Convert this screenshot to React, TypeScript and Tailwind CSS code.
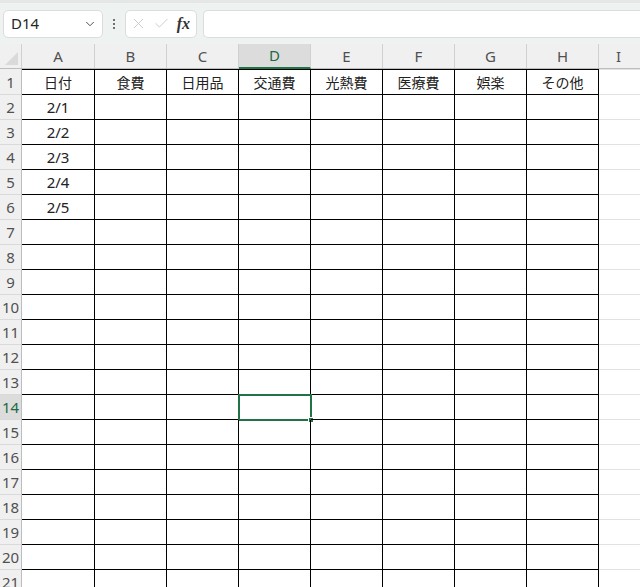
import { ChevronDown, X, Check } from "lucide-react";

const columns = ["A", "B", "C", "D", "E", "F", "G", "H"];
const headers = ["日付", "食費", "日用品", "交通費", "光熱費", "医療費", "娯楽", "その他"];
const dates = ["2/1", "2/2", "2/3", "2/4", "2/5"];
const ROWS = 21;
const SELECTED_ROW = 14;
const SELECTED_COL = 3;

function FormulaBar() {
  return (
    <div className="h-[44px] bg-[#eef2f1] border-t-[3px] border-[#e4e7e6] flex items-center pl-[3px] gap-0">
      <div className="w-[100px] h-[28px] bg-white border border-[#dcdcdc] rounded-[5px] flex items-center justify-between pl-[7px] pr-[5px] text-[15px] text-[#262626]">
        <span>D14</span>
        <ChevronDown size={14} strokeWidth={1.6} className="text-[#444]" />
      </div>
      <div className="w-[22px] flex flex-col items-center gap-[2px]">
        <span className="w-[2px] h-[2px] bg-[#444] rounded-full" />
        <span className="w-[2px] h-[2px] bg-[#444] rounded-full" />
        <span className="w-[2px] h-[2px] bg-[#444] rounded-full" />
      </div>
      <div className="w-[72px] h-[28px] bg-white border border-[#dcdcdc] rounded-[5px] flex items-center justify-between px-[4px]">
        <X size={17} strokeWidth={1.2} className="text-[#c4c4c4]" />
        <Check size={17} strokeWidth={1.2} className="text-[#c4c4c4]" />
        <span className="font-['Liberation_Serif'] italic font-bold text-[16px] text-[#333] leading-none pr-[2px]">
          fx
        </span>
      </div>
      <div className="flex-1 h-[28px] bg-white border border-[#dcdcdc] border-r-0 rounded-l-[5px] ml-[6px]" />
    </div>
  );
}

// column A is one pixel wider than the rest
const colWidth = (i: number) => (i === 0 ? "w-[73px]" : "w-[72px]");

function ColumnHeader() {
  return (
    <div className="flex h-[25px] bg-[#f0f0f0] border-b border-[#bdbdbd] text-[15px] text-[#505050]">
      <div className="w-[22px] shrink-0 border-r border-[#d0d0d0] relative overflow-hidden">
        <div className="absolute right-[3px] bottom-[3px] w-0 h-0 border-l-[13px] border-l-transparent border-b-[13px] border-b-[#dadada]" />
      </div>
      {columns.map((c, i) => (
        <div
          key={c}
          className={`${colWidth(i)} shrink-0 flex items-center justify-center border-r border-r-[#d0d0d0] ${
            i === SELECTED_COL ? "bg-[#dcdcdc] text-[#1e6b42] border-b-2 border-b-[#217346] -mb-px" : ""
          }`}
        >
          {c}
        </div>
      ))}
      <div className="flex-1 flex items-center justify-center pr-[2px]">I</div>
    </div>
  );
}

function Row({ r }: { r: number }) {
  const first = r === 1;
  const selected = r === SELECTED_ROW;
  const h = first ? "h-[26px] border-t border-t-black" : "h-[25px]";
  return (
    <div className="flex">
      <div
        className={`w-[22px] shrink-0 flex items-center justify-center border-r border-[#bdbdbd] text-[15px] ${
          first ? "h-[26px] pt-px" : "h-[25px]"
        } ${selected ? "bg-[#dcdcdc] text-[#1e6b42]" : "bg-[#f0f0f0] text-[#505050]"} border-b border-b-[#dadada]`}
      >
        {r}
      </div>
      {columns.map((c, i) => {
        let text = "";
        if (first) text = headers[i];
        else if (i === 0 && r - 2 < dates.length) text = dates[r - 2];
        const isSel = selected && i === SELECTED_COL;
        return (
          <div
            key={c}
            className={`${colWidth(i)} shrink-0 ${h} border-r border-b border-black flex items-center justify-center ${
              first ? "text-[14px]" : "text-[15px]"
            } text-[#222] relative`}
          >
            {text}
            {isSel && (
              <div className="absolute -left-[1px] -top-[1px] w-[74px] h-[27px] border-2 border-[#217346] pointer-events-none">
                <div className="absolute -right-[4px] -bottom-[4px] w-[6px] h-[6px] bg-[#217346] border border-white" />
              </div>
            )}
          </div>
        );
      })}
      <div className={`flex-1 ${first ? "h-[26px] border-t border-t-[#e2e2e2]" : "h-[25px]"} border-b border-[#e2e2e2]`} />
    </div>
  );
}

export default function App() {
  const rows = Array.from({ length: ROWS }, (_, i) => i + 1);
  return (
    <div className="w-[640px] h-[587px] overflow-hidden bg-white font-['Noto_Sans','Noto_Sans_CJK_JP',sans-serif]">
      <FormulaBar />
      <ColumnHeader />
      {rows.map((r) => (
        <Row key={r} r={r} />
      ))}
    </div>
  );
}
